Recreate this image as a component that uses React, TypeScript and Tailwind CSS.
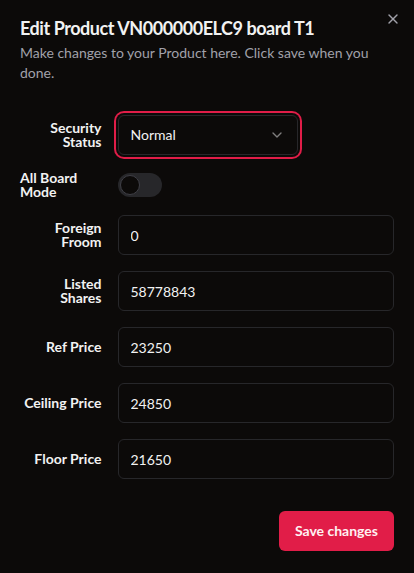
import React from 'react';
import { ChevronDown, X } from 'lucide-react';

const fields = [
  { label: 'Foreign Froom', lines: ['Foreign', 'Froom'], value: '0' },
  { label: 'Listed Shares', lines: ['Listed', 'Shares'], value: '58778843' },
  { label: 'Ref Price', lines: ['Ref Price'], value: '23250' },
  { label: 'Ceiling Price', lines: ['Ceiling Price'], value: '24850' },
  { label: 'Floor Price', lines: ['Floor Price'], value: '21650' },
];

function FieldLabel({ children, left }: { children: React.ReactNode; left?: boolean }) {
  return (
    <label
      className={`${left ? 'text-left' : 'text-right'} text-sm leading-[14px] font-bold whitespace-nowrap text-[#f2f2f2]`}
    >
      {children}
    </label>
  );
}

export default function App() {
  return (
    <div
      className="relative min-h-[573px] w-full bg-[#0c0a09] px-5 pt-[19px] pb-5 text-[#f2f2f2]"
      style={{ fontFamily: 'Lato, "Noto Sans", sans-serif' }}
    >
      <button className="absolute top-[11px] right-[13px] text-[#a1a1aa]">
        <X size={16} />
      </button>

      <div className="flex flex-col gap-1.5">
        <h2 className="text-lg leading-none font-bold tracking-tight">Edit Product VN000000ELC9 board T1</h2>
        <p className="text-sm leading-5 text-[#a1a1aa]">
          Make changes to your Product here. Click save when you done.
        </p>
      </div>

      <div className="mt-4 grid gap-4 py-4">
        <div className="grid grid-cols-4 items-center gap-4">
          <FieldLabel>
            Security
            <br />
            Status
          </FieldLabel>
          <div className="col-span-3">
            <button className="flex h-10 w-[180px] items-center justify-between rounded-md border border-[#27272a] bg-[#0c0a09] px-3 text-sm ring-2 ring-[#e11d48] ring-offset-2 ring-offset-[#0c0a09]">
              <span>Normal</span>
              <ChevronDown size={16} className="opacity-50" />
            </button>
          </div>
        </div>

        <div className="grid grid-cols-4 items-center gap-4">
          <FieldLabel left>
            All Board
            <br />
            Mode
          </FieldLabel>
          <div className="col-span-3">
            <div className="flex h-6 w-11 items-center rounded-full border-2 border-transparent bg-[#27272a]">
              <span className="block h-5 w-5 rounded-full border border-[#3f3f46] bg-[#0c0a09]" />
            </div>
          </div>
        </div>

        {fields.map((f) => (
          <div key={f.label} className="grid grid-cols-4 items-center gap-4">
            <FieldLabel>
              {f.lines.map((l, i) => (
                <span key={i} className="block">
                  {l}
                </span>
              ))}
            </FieldLabel>
            <input
              defaultValue={f.value}
              className="col-span-3 h-10 rounded-md border border-[#27272a] bg-[#0c0a09] px-3 text-sm text-[#f2f2f2] outline-none"
            />
          </div>
        ))}
      </div>

      <div className="mt-4 flex justify-end">
        <button className="h-10 rounded-md bg-[#e11d48] px-4 text-sm font-bold text-[#fff1f2]">Save changes</button>
      </div>
    </div>
  );
}
